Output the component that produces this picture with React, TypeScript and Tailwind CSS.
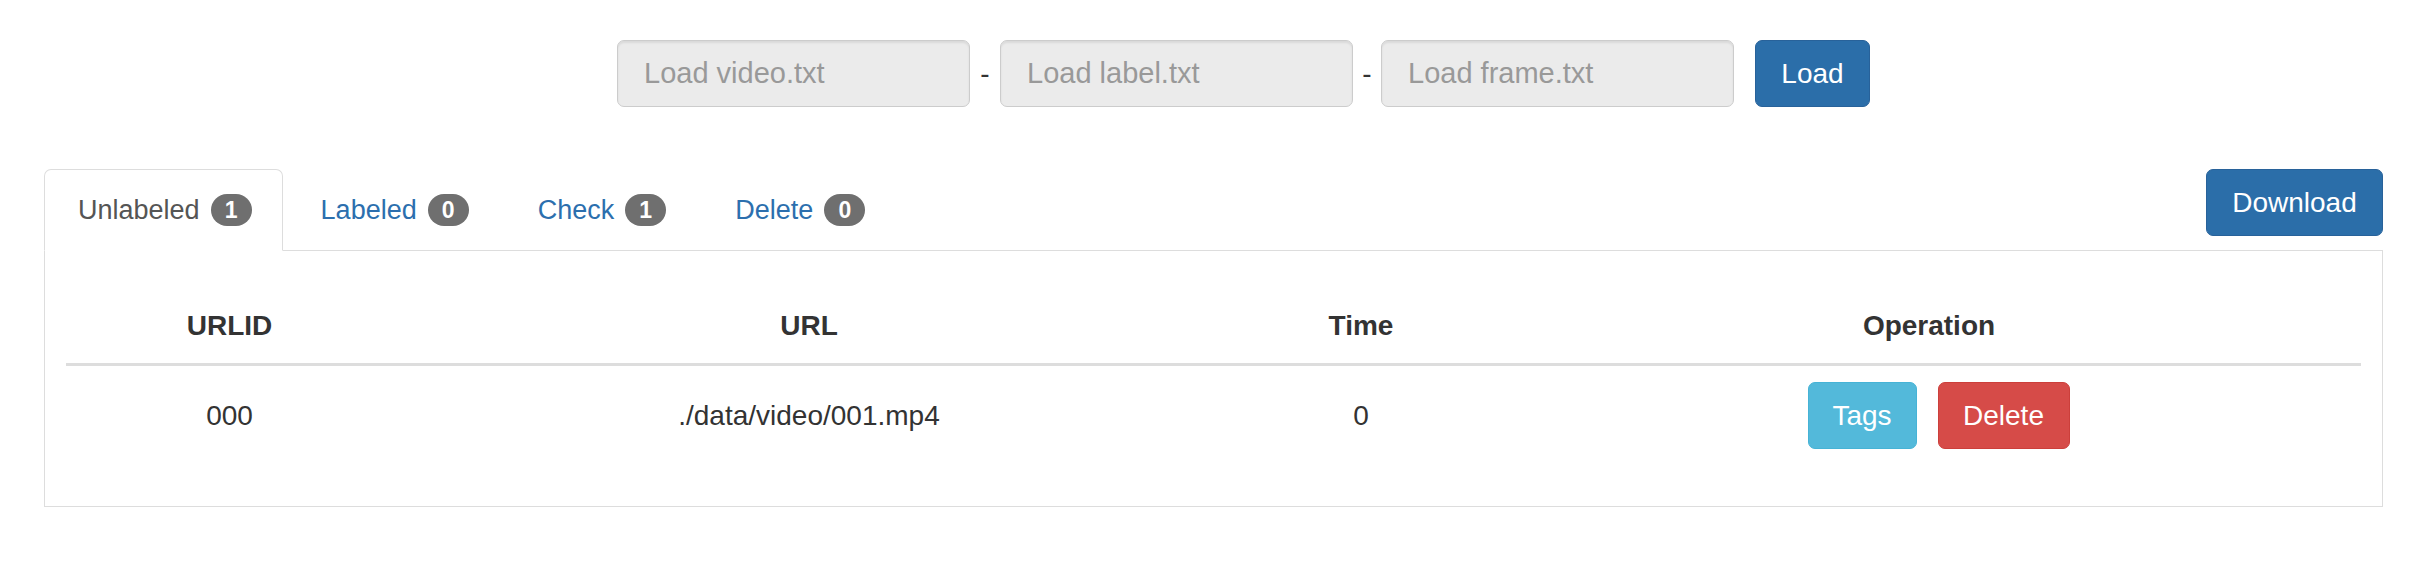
import { useState } from 'react';

type Row = { id: string; url: string; time: number };

const tabs = [
  { key: 'unlabeled', label: 'Unlabeled', count: 1 },
  { key: 'labeled', label: 'Labeled', count: 0 },
  { key: 'check', label: 'Check', count: 1 },
  { key: 'delete', label: 'Delete', count: 0 },
];

const rows: Row[] = [{ id: '000', url: './data/video/001.mp4', time: 0 }];

function FileInput({ placeholder }: { placeholder: string }) {
  return (
    <input
      readOnly
      placeholder={placeholder}
      className="w-[353px] h-[67px] px-[26px] rounded-[7px] border border-[#cccccc] bg-[#ebebeb] text-[29px] text-[#555] placeholder:text-[#999] shadow-[inset_0_2px_2px_rgba(0,0,0,0.075)] outline-none"
    />
  );
}

export default function App() {
  const [active, setActive] = useState('unlabeled');

  return (
    <div className="min-h-[578px] bg-white text-[#333] text-[28px] font-['Liberation_Sans',Arial,sans-serif]">
      {/* Loader bar */}
      <div className="flex justify-center items-center pt-[40px] pl-[51px]">
        <FileInput placeholder="Load video.txt" />
        <span className="w-[30px] text-center leading-none">-</span>
        <FileInput placeholder="Load label.txt" />
        <span className="w-[28px] text-center leading-none">-</span>
        <FileInput placeholder="Load frame.txt" />
        <button className="ml-[21px] w-[115px] h-[67px] rounded-[7px] border border-[#28629a] bg-[#2b6ea9] text-white text-[28px]">
          Load
        </button>
      </div>

      <div className="pl-[44px] pr-[53px] mt-[62px]">
        {/* Tabs row */}
        <div className="flex items-start justify-between border-b border-[#dddddd]">
          <ul className="flex -mb-px">
            {tabs.map((t) => {
              const isActive = t.key === active;
              return (
                <li key={t.key} className="mr-[4px]">
                  <button
                    onClick={() => setActive(t.key)}
                    className={
                      isActive
                        ? 'h-[82px] flex items-center gap-[11px] pl-[33px] pr-[30px] rounded-t-[7px] border border-[#dddddd] border-b-white bg-white text-[#555] text-[27px]'
                        : 'h-[82px] flex items-center gap-[11px] pl-[33px] pr-[30px] rounded-t-[7px] border border-transparent text-[#2c6fae] text-[27px]'
                    }
                  >
                    <span>{t.label}</span>
                    <span className="h-[32px] min-w-[41px] px-[11px] rounded-full bg-[#6f6f6f] text-white text-[23px] font-bold flex items-center justify-center leading-none">
                      {t.count}
                    </span>
                  </button>
                </li>
              );
            })}
          </ul>
          <button className="w-[177px] h-[67px] rounded-[7px] border border-[#28629a] bg-[#2b6ea9] text-white text-[28px]">
            Download
          </button>
        </div>

        {/* Tab content */}
        <div className="border border-t-0 border-[#dddddd] px-[21px] pt-[38px] pb-[41px]">
          <table className="w-full table-fixed border-collapse">
            <thead>
              <tr>
                <th className="w-[327px] py-[14px] leading-[46px] font-bold text-center border-b-[3px] border-[#dddddd]">URLID</th>
                <th className="w-[832px] py-[14px] leading-[46px] font-bold text-center border-b-[3px] border-[#dddddd]">URL</th>
                <th className="w-[272px] py-[14px] leading-[46px] font-bold text-center border-b-[3px] border-[#dddddd]">Time</th>
                <th className="py-[14px] leading-[46px] font-bold text-center border-b-[3px] border-[#dddddd]">Operation</th>
              </tr>
            </thead>
            <tbody>
              {rows.map((r) => (
                <tr key={r.id}>
                  <td className="py-[16px] text-center">{r.id}</td>
                  <td className="py-[16px] text-center">{r.url}</td>
                  <td className="py-[16px] text-center">{r.time}</td>
                  <td className="py-[16px]">
                    <div className="flex justify-center gap-[21px] pl-[19px]">
                      <button className="w-[109px] h-[67px] rounded-[7px] border border-[#46b3d6] bg-[#53b9da] text-white text-[28px]">
                        Tags
                      </button>
                      <button className="w-[132px] h-[67px] rounded-[7px] border border-[#cc3f3b] bg-[#d64b48] text-white text-[28px]">
                        Delete
                      </button>
                    </div>
                  </td>
                </tr>
              ))}
            </tbody>
          </table>
        </div>
      </div>
    </div>
  );
}
